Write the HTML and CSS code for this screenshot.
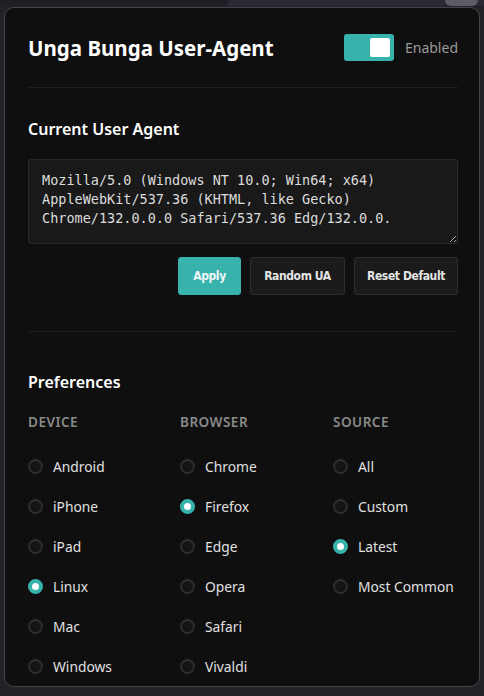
FILE: index.html
```html
<!DOCTYPE html>
<html lang="en">
<head>
<meta charset="utf-8">
<title>Unga Bunga User-Agent</title>
<link rel="stylesheet" href="styles.css">
</head>
<body>
<div class="topbar">
  <div class="topbar-left"></div>
  <div class="topbar-thumb"></div>
</div>
<main class="card">
  <header class="header">
    <h1 class="title">Unga Bunga User-Agent</h1>
    <label class="switch-wrap">
      <span class="switch"><span class="knob"></span></span>
      <span class="switch-label">Enabled</span>
    </label>
  </header>
  <hr class="divider">
  <section class="ua-section">
    <h2 class="section-title">Current User Agent</h2>
    <textarea class="ua-box" spellcheck="false">Mozilla/5.0 (Windows NT 10.0; Win64; x64) AppleWebKit/537.36 (KHTML, like Gecko) Chrome/132.0.0.0 Safari/537.36 Edg/132.0.0.</textarea>
    <div class="actions">
      <button class="btn btn-primary">Apply</button>
      <button class="btn btn-random">Random UA</button>
      <button class="btn btn-reset">Reset Default</button>
    </div>
  </section>
  <hr class="divider divider-2">
  <section class="prefs">
    <h2 class="section-title">Preferences</h2>
    <div class="pref-grid">
      <div class="pref-col">
        <div class="col-title">DEVICE</div>
        <div class="opt"><span class="radio"></span>Android</div>
        <div class="opt"><span class="radio"></span>iPhone</div>
        <div class="opt"><span class="radio"></span>iPad</div>
        <div class="opt"><span class="radio checked"></span>Linux</div>
        <div class="opt"><span class="radio"></span>Mac</div>
        <div class="opt"><span class="radio"></span>Windows</div>
      </div>
      <div class="pref-col">
        <div class="col-title">BROWSER</div>
        <div class="opt"><span class="radio"></span>Chrome</div>
        <div class="opt"><span class="radio checked"></span>Firefox</div>
        <div class="opt"><span class="radio"></span>Edge</div>
        <div class="opt"><span class="radio"></span>Opera</div>
        <div class="opt"><span class="radio"></span>Safari</div>
        <div class="opt"><span class="radio"></span>Vivaldi</div>
      </div>
      <div class="pref-col">
        <div class="col-title">SOURCE</div>
        <div class="opt"><span class="radio"></span>All</div>
        <div class="opt"><span class="radio"></span>Custom</div>
        <div class="opt"><span class="radio checked"></span>Latest</div>
        <div class="opt"><span class="radio"></span>Most Common</div>
      </div>
    </div>
  </section>
</main>
</body>
</html>
```
FILE: styles.css
```css
* { box-sizing: border-box; }
html, body { margin: 0; padding: 0; }
body {
  background: #232327;
  font-family: "Noto Sans", "Open Sans", sans-serif;
  color: #e2e2e2;
  width: 484px;
  height: 696px;
  overflow: hidden;
}
.topbar {
  display: flex;
  height: 6px;
  background: #2a2a32;
}
.topbar-left {
  width: 228px;
  background: #1f1f26;
  border-bottom-right-radius: 4px;
}
.topbar-thumb {
  margin-left: auto;
  margin-right: 6px;
  width: 33px;
  background: #5c5c66;
  border-radius: 0 0 6px 6px;
}
.card {
  margin: 1px 4px 0 4px;
  height: 680px;
  background: #0f0f0f;
  border: 1px solid #44444c;
  border-radius: 10px;
  padding: 0 21px 0 23px;
  overflow: hidden;
}
.header {
  display: flex;
  align-items: center;
  padding: 26px 0;
  height: 79px;
}
.title {
  margin: 0;
  font-size: 20.5px;
  font-weight: 700;
  color: #ffffff;
  flex: 1;
}
.switch-wrap {
  display: flex;
  align-items: center;
  gap: 11px;
}
.switch {
  width: 50px;
  height: 27px;
  background: #38b2ac;
  border-radius: 3px;
  display: flex;
  align-items: center;
  justify-content: flex-end;
  padding-right: 4px;
}
.knob {
  width: 20px;
  height: 19px;
  background: #ffffff;
  border-radius: 2px;
}
.switch-label {
  color: #9a9a9a;
  font-size: 14px;
}
.divider {
  border: 0;
  border-top: 1px solid #1f1f1f;
  margin: 0;
}
.section-title {
  margin: 0;
  font-size: 16px;
  line-height: 20px;
  font-weight: 600;
  color: #ffffff;
}
.ua-section { padding-top: 31px; }
.ua-box {
  display: block;
  margin-top: 20px;
  width: 100%;
  height: 85px;
  background: #191919;
  border: 1px solid #2a2a2a;
  border-radius: 3px;
  padding: 11px 13px;
  color: #dcdcdc;
  font-family: "DejaVu Sans Mono", "Liberation Mono", monospace;
  font-size: 13.5px;
  line-height: 19px;
  resize: vertical;
  outline: none;
  overflow: hidden;
}
.actions {
  display: flex;
  justify-content: flex-end;
  gap: 9px;
  margin-top: 13px;
}
.btn {
  height: 38px;
  padding: 0;
  background: #1b1b1b;
  border: 1px solid #2e2e2e;
  border-radius: 3px;
  color: #e4e4e4;
  font-family: "DejaVu Sans Condensed", "DejaVu Sans", sans-serif;
  font-stretch: condensed;
  font-weight: 700;
  font-size: 12px;
  letter-spacing: -0.4px;
  text-align: center;
}
.btn-primary {
  background: #38b2ac;
  border-color: #38b2ac;
  color: #f0f6f6;
  width: 63px;
}
.btn-random { width: 95px; }
.btn-reset { width: 104px; }
.divider-2 { margin-top: 36px; }
.prefs { padding-top: 40px; }
.pref-grid {
  display: grid;
  grid-template-columns: 126px 127px 1fr;
  column-gap: 26px;
  margin-top: 21px;
}
.pref-col {
  display: flex;
  flex-direction: column;
  gap: 16px;
}
.col-title {
  font-size: 13.5px;
  line-height: 18px;
  font-weight: 600;
  letter-spacing: 0.5px;
  color: #8a8a8a;
  margin-bottom: 7px;
}
.opt {
  display: flex;
  align-items: center;
  gap: 10px;
  height: 24px;
  font-size: 13.8px;
  color: #e0e0e0;
  white-space: nowrap;
}
.radio {
  width: 15px;
  height: 15px;
  border-radius: 50%;
  border: 2px solid #2e2e2e;
  background: #151515;
  flex: none;
}
.radio.checked {
  border: 4.5px solid #38b2ac;
  background: #ffffff;
}
```
